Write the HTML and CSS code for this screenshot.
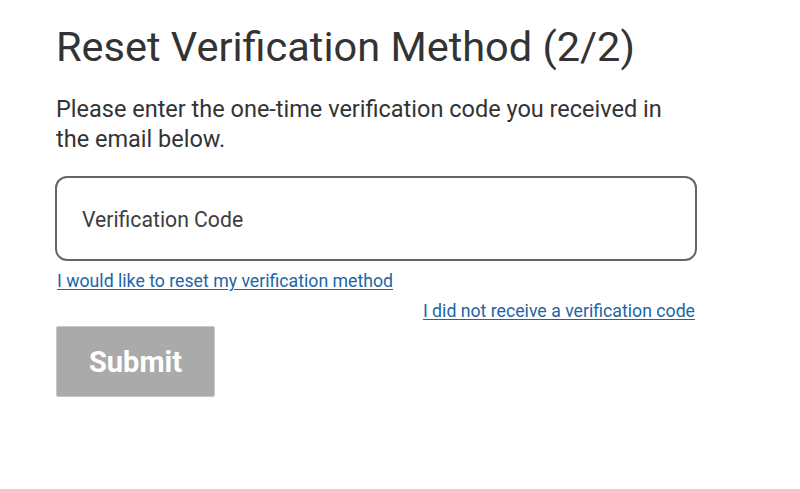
FILE: index.html
```html
<!DOCTYPE html>
<html lang="en">
<head>
<meta charset="utf-8">
<title>Reset Verification Method</title>
<link rel="stylesheet" href="styles.css">
</head>
<body>
<main class="page">
  <h1 class="title">Reset Verification Method (2/2)</h1>
  <p class="intro">Please enter the one-time verification code you received in the email below.</p>
  <form class="form">
    <input class="code-input" type="text" placeholder="Verification Code">
    <a class="link link-left" href="#">I would like to reset my verification method</a>
    <a class="link link-right" href="#">I did not receive a verification code</a>
    <button class="submit" type="button" disabled>Submit</button>
  </form>
</main>
</body>
</html>
```
FILE: styles.css
```css
html, body {
  margin: 0;
  padding: 0;
  background: #ffffff;
}
body {
  font-family: Roboto, "Liberation Sans", Arial, sans-serif;
  color: #333333;
}
.page {
  width: 642px;
  padding: 21px 0 0 55px;
}
.title {
  margin: 0;
  font-size: 41.5px;
  font-weight: 400;
  line-height: 52px;
  color: #333333;
  padding-left: 1px;
}
.intro {
  margin: 21px 0 0 0;
  padding-left: 1px;
  font-size: 23.5px;
  line-height: 30px;
  color: #333333;
  width: 630px;
}
.form {
  display: flex;
  flex-direction: column;
  margin-top: 22px;
}
.code-input {
  box-sizing: border-box;
  width: 642px;
  height: 85px;
  border: 2px solid #666666;
  border-radius: 12px;
  padding: 2px 0 0 25px;
  font-family: inherit;
  font-size: 21.2px;
  color: #333333;
  background: #fff;
  outline: none;
}
.code-input::placeholder {
  color: #3d3d3d;
  opacity: 1;
}
.link {
  font-size: 17.7px;
  line-height: 20px;
  color: #1c65a6;
  text-decoration: underline;
  text-underline-offset: 2px;
}
.link-left {
  align-self: flex-start;
  margin: 10px 0 0 2px;
}
.link-right {
  align-self: flex-end;
  margin: 10px 2px 0 0;
}
.submit {
  align-self: flex-start;
  margin: 5px 0 0 1px;
  width: 159px;
  height: 71px;
  box-sizing: border-box;
  background: #aaaaaa;
  border: 1px solid #c2c8cc;
  border-radius: 2px;
  color: #ffffff;
  font-family: inherit;
  font-size: 29px;
  font-weight: 700;
  padding: 0;
}
```
